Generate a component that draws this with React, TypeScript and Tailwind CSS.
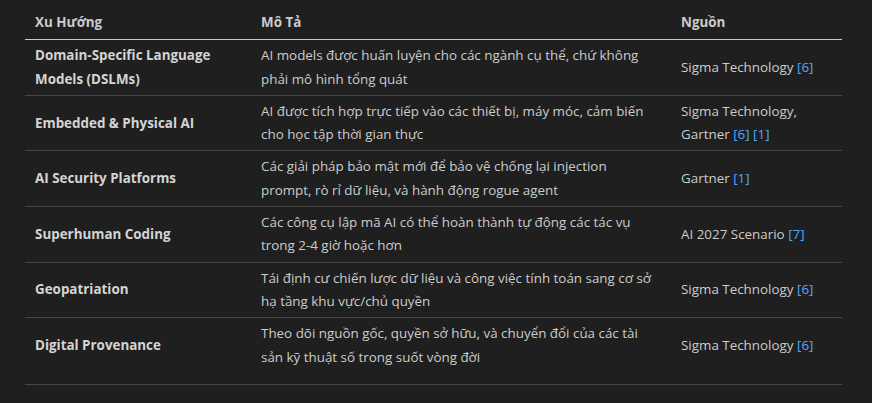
import { Fragment } from 'react';

const rows = [
  {
    trend: 'Domain-Specific Language Models (DSLMs)',
    desc: 'AI models được huấn luyện cho các ngành cụ thể, chứ không phải mô hình tổng quát',
    source: 'Sigma Technology',
    refs: ['6'],
  },
  {
    trend: 'Embedded & Physical AI',
    desc: 'AI được tích hợp trực tiếp vào các thiết bị, máy móc, cảm biến cho học tập thời gian thực',
    source: 'Sigma Technology, Gartner',
    refs: ['6', '1'],
  },
  {
    trend: 'AI Security Platforms',
    desc: 'Các giải pháp bảo mật mới để bảo vệ chống lại injection prompt, rò rỉ dữ liệu, và hành động rogue agent',
    source: 'Gartner',
    refs: ['1'],
  },
  {
    trend: 'Superhuman Coding',
    desc: 'Các công cụ lập mã AI có thể hoàn thành tự động các tác vụ trong 2-4 giờ hoặc hơn',
    source: 'AI 2027 Scenario',
    refs: ['7'],
  },
  {
    trend: 'Geopatriation',
    desc: 'Tái định cư chiến lược dữ liệu và công việc tính toán sang cơ sở hạ tầng khu vực/chủ quyền',
    source: 'Sigma Technology',
    refs: ['6'],
  },
  {
    trend: 'Digital Provenance',
    desc: 'Theo dõi nguồn gốc, quyền sở hữu, và chuyển đổi của các tài sản kỹ thuật số trong suốt vòng đời',
    source: 'Sigma Technology',
    refs: ['6'],
  },
];

export default function App() {
  return (
    <div className="w-[872px] h-[403px] bg-[#1f1f1f] text-[#cccccc] font-['Open_Sans',sans-serif] text-[13.4px] leading-[23.3px] overflow-hidden">
      <table className="ml-[25px] w-[817px] border-collapse table-fixed">
        <colgroup>
          <col className="w-[226px]" />
          <col className="w-[420px]" />
          <col className="w-[171px]" />
        </colgroup>
        <thead>
          <tr className="border-b border-[#c8c8c8]">
            <th className="text-left font-bold pl-[10px] pt-[11px] pb-[5px]">Xu Hướng</th>
            <th className="text-left font-bold pl-[10px] pt-[11px] pb-[5px]">Mô Tả</th>
            <th className="text-left font-bold pl-[10px] pt-[11px] pb-[5px]">Nguồn</th>
          </tr>
        </thead>
        <tbody>
          {rows.map((r, i) => {
            const last = i === rows.length - 1;
            const pad = last ? 'pt-1 pb-[15px]' : 'py-1';
            return (
              <tr key={r.trend} className="border-b border-[#454545]">
                <td className={`px-[10px] font-bold text-[#d4d4d4] align-middle ${pad}`}>{r.trend}</td>
                <td className={`pl-[10px] pr-[16px] align-middle ${pad}`}>{r.desc}</td>
                <td className={`px-[10px] align-middle ${pad}`}>
                  {r.source}
                  {r.refs.map((ref) => (
                    <Fragment key={ref}>
                      {' '}
                      <a className="text-[#4daafc]">[{ref}]</a>
                    </Fragment>
                  ))}
                </td>
              </tr>
            );
          })}
        </tbody>
      </table>
    </div>
  );
}
